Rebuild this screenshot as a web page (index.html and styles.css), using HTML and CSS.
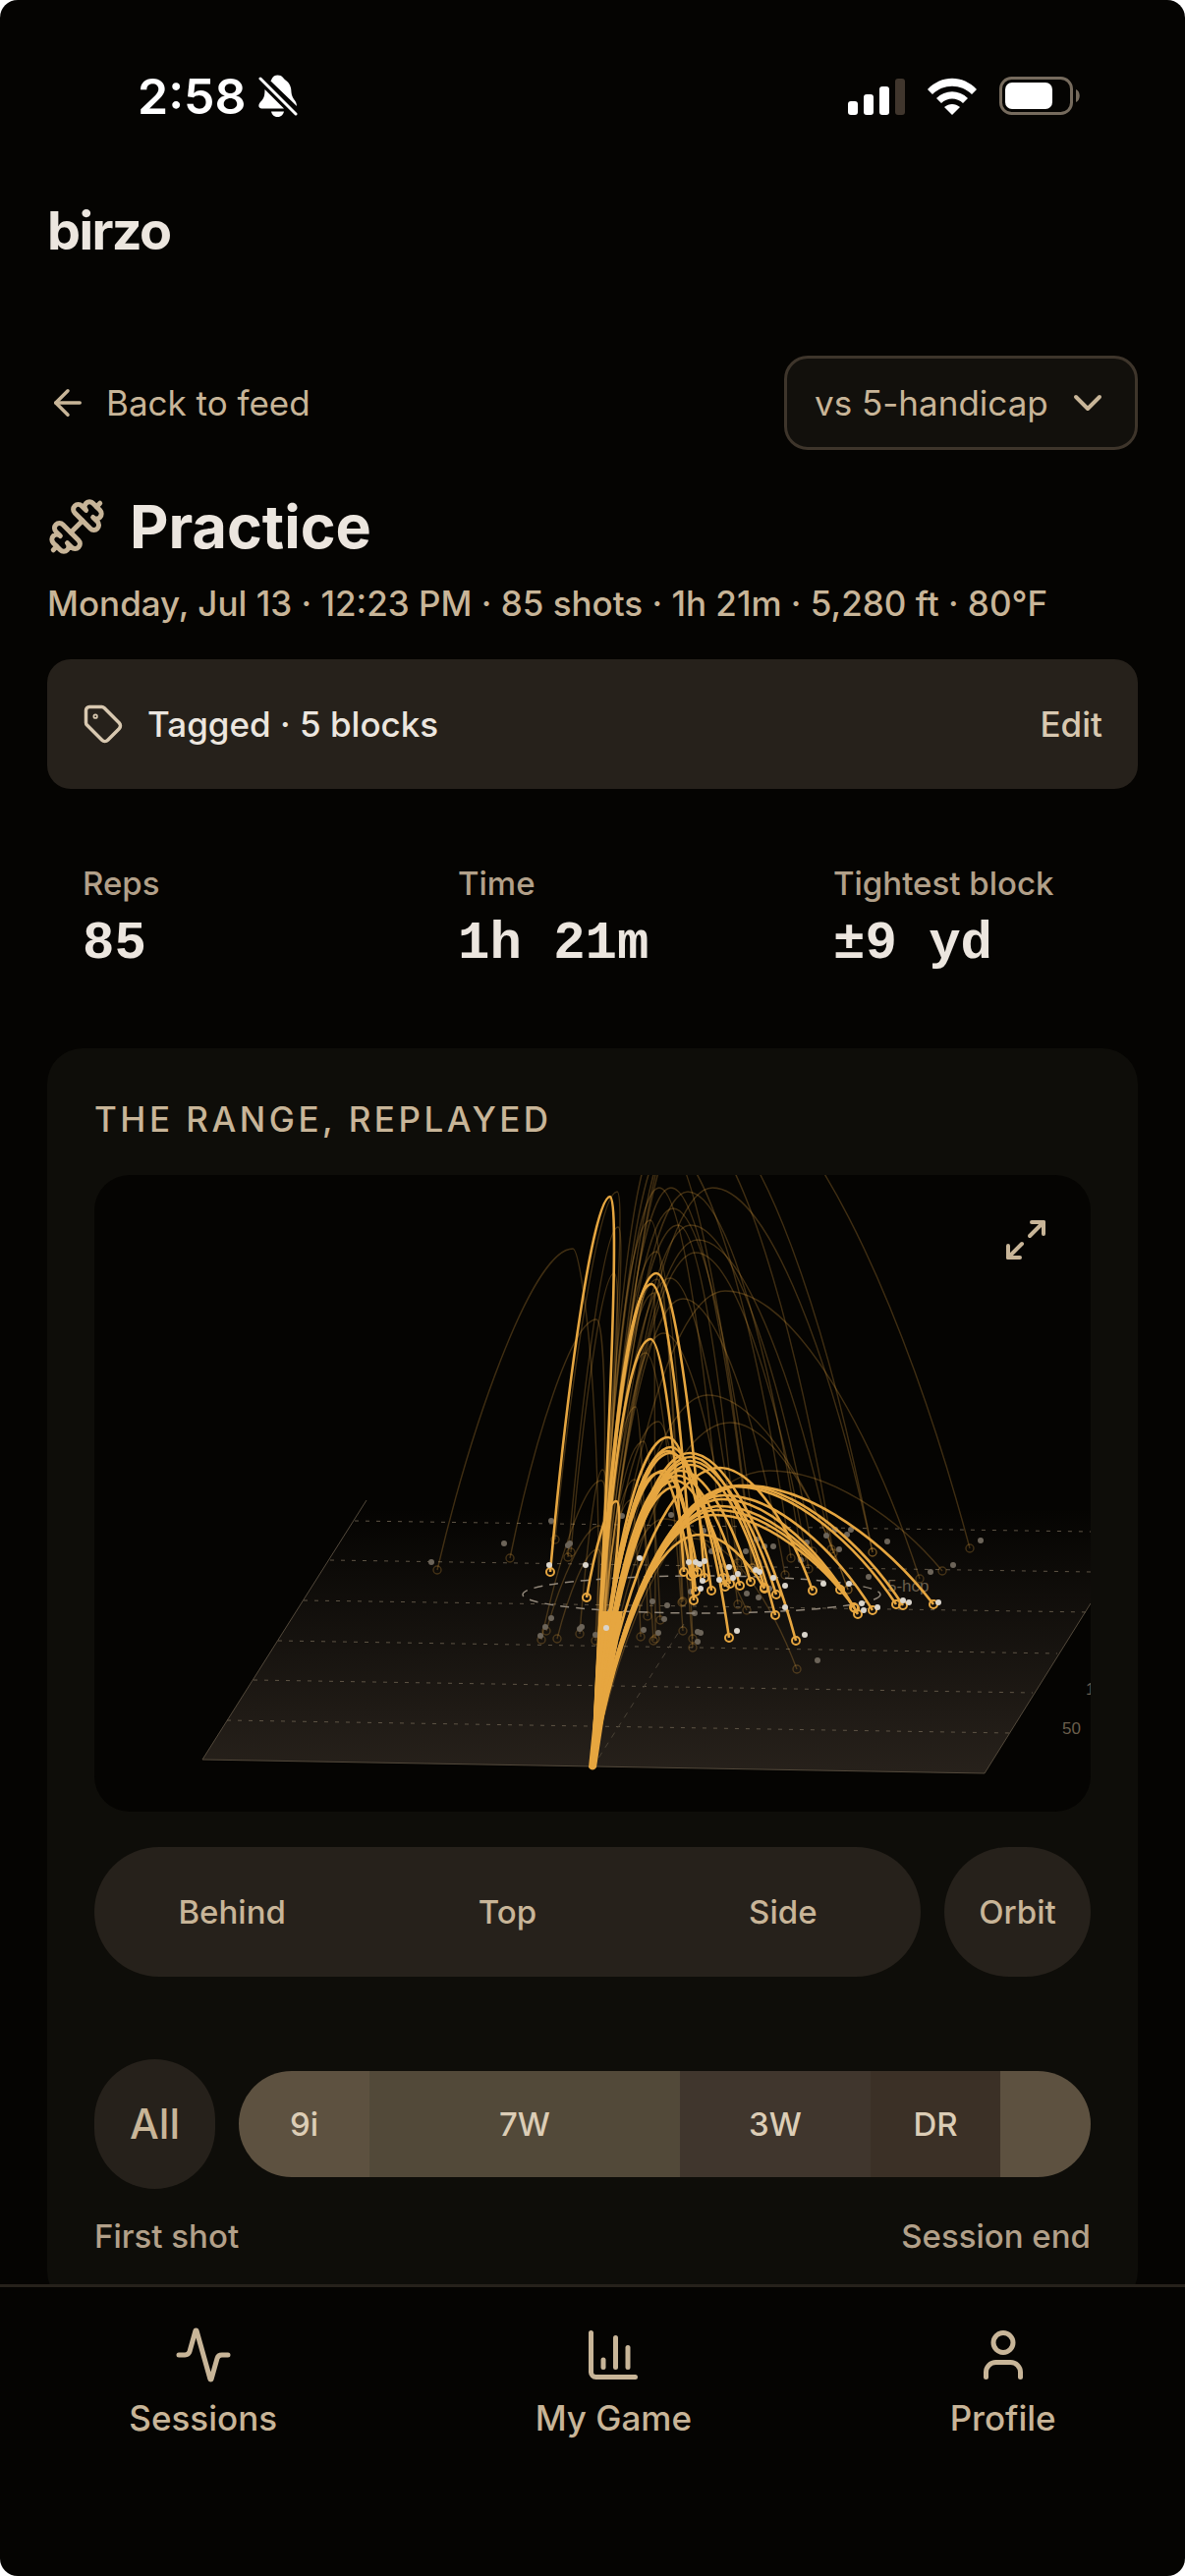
FILE: index.html
```html
<!DOCTYPE html>
<html lang="en">
<head>
    <meta charset="UTF-8">
    <meta name="viewport" content="width=device-width, initial-scale=1.0">
    <title>birzo - Practice</title>
    <link rel="stylesheet" href="styles.css">
</head>
<body>
    <div class="app">
        <div class="status-bar">
            <div class="status-left">
                <span class="time">2:58</span>
                <svg class="bell" viewBox="0 0 40 44" aria-hidden="true">
                    <path class="solid" d="M12 7C14 5 14 0.500 19.500 0.500S25 4 27.500 5.500C32 8.500 33.500 13 33.500 18C34 25 39 26 39 32L12.500 6.500ZM6.500 15L26 34.500H3.500C0 34.500 -0.500 31 1.500 28.500C4.500 25 6.500 24 6.500 15ZM13 37.500H26C25 41.500 22.500 43 19.500 43S14 41.500 13 37.500Z"/>
                    <path class="slash" d="M2 4L38 40"/>
                </svg>
            </div>
            <div class="status-right">
                <svg class="signal" viewBox="0 0 58 38" aria-hidden="true">
                    <rect x="0" y="24" width="10" height="14" rx="3"/>
                    <rect x="16" y="17" width="10" height="21" rx="3"/>
                    <rect x="32" y="9" width="10" height="29" rx="3"/>
                    <rect class="off" x="48" y="1" width="10" height="37" rx="3"/>
                </svg>
                <svg class="wifi" viewBox="0 0 52 38" aria-hidden="true">
                    <path d="M1 12C15 -3 37 -3 51 12L46 17C35 6 17 6 6 17Z"/>
                    <path d="M10 21C19 12 33 12 42 21L37 26C31 20 21 20 15 26Z"/>
                    <path d="M18 30C23 26 29 26 34 30L26 38Z"/>
                </svg>
                <svg class="battery" viewBox="0 0 84 40" aria-hidden="true">
                    <rect class="shell" x="1.500" y="1.500" width="72" height="36" rx="11"/>
                    <rect x="6" y="6" width="48" height="27" rx="7"/>
                    <path class="nub" d="M78 13C83 15 83 24 78 26Z"/>
                </svg>
            </div>
        </div>

        <main class="content">
            <header class="brand">birzo</header>

            <div class="toolbar">
                <a class="back" href="#">
                    <svg class="icon icon-md" viewBox="0 0 24 24" aria-hidden="true"><path d="m12 19-7-7 7-7"/><path d="M19 12H5"/></svg>
                    Back to feed
                </a>
                <div class="compare">
                    <select aria-label="Compare against">
                        <option>vs 5-handicap</option>
                        <option>vs 10-handicap</option>
                        <option>vs scratch</option>
                    </select>
                    <svg class="icon icon-lg" viewBox="0 0 24 24" aria-hidden="true"><path d="m6 9 6 6 6-6"/></svg>
                </div>
            </div>

            <h1 class="title">
                <svg class="icon icon-xl" viewBox="0 0 24 24" aria-hidden="true">
                    <path d="M17.596 12.768a2 2 0 1 0 2.829-2.829l-1.768-1.767a2 2 0 0 0 2.828-2.829l-2.828-2.828a2 2 0 0 0-2.829 2.828l-1.767-1.768a2 2 0 1 0-2.829 2.829z"/>
                    <path d="m2.500 21.500 1.400-1.400"/>
                    <path d="m20.100 3.900 1.400-1.400"/>
                    <path d="M5.343 21.485a2 2 0 1 0 2.829-2.828l1.767 1.768a2 2 0 1 0 2.829-2.829l-6.364-6.364a2 2 0 1 0-2.829 2.829l1.768 1.767a2 2 0 0 0-2.828 2.829z"/>
                    <path d="m9.600 14.400 4.800-4.800"/>
                </svg>
                Practice
            </h1>
            <p class="meta">Monday, Jul 13 · 12:23 PM · 85 shots · 1h 21m · 5,280 ft · 80°F</p>

            <div class="tagged">
                <svg class="icon icon-md" viewBox="0 0 24 24" aria-hidden="true">
                    <path d="M12.586 2.586A2 2 0 0 0 11.172 2H4a2 2 0 0 0-2 2v7.172a2 2 0 0 0 .586 1.414l8.704 8.704a2.426 2.426 0 0 0 3.420 0l6.580-6.580a2.426 2.426 0 0 0 0-3.420z"/>
                    <circle cx="7.500" cy="7.500" r=".5"/>
                </svg>
                <span>Tagged · 5 blocks</span>
                <button class="edit" type="button">Edit</button>
            </div>

            <dl class="stats">
                <div class="stat"><dt>Reps</dt><dd>85</dd></div>
                <div class="stat"><dt>Time</dt><dd>1h 21m</dd></div>
                <div class="stat"><dt>Tightest block</dt><dd>±9 yd</dd></div>
            </dl>

            <section class="panel">
                <h2>The range, replayed</h2>

                <div class="range">
                    <svg class="scene" viewBox="0 0 1014 648" role="img" aria-label="Shot trajectories on the range">
                        <defs>
                            <linearGradient id="turf" x1="0" y1="340" x2="0" y2="608" gradientUnits="userSpaceOnUse">
                                <stop offset="0" stop-color="#27211b" stop-opacity="0"/>
                                <stop offset="0.5" stop-color="#27211b" stop-opacity="0.5"/>
                                <stop offset="1" stop-color="#27211b"/>
                            </linearGradient>
                        </defs>
                        <path class="turf" d="M110 595L277 331H1014V436L906 609Z"/>
                        <path class="edge" d="M277 331L110 595L906 609L1014 436"/>
                        <g class="yards">
                            <path d="M265 352L1014 363"/>
                            <path d="M240 392L1014 404"/>
                            <path d="M213 433L1014 445"/>
                            <path d="M187 474L980 487"/>
                            <path d="M162 514L955 527"/>
                            <path d="M135 555L932 568"/>
                        </g>
                        <path class="aim" d="M507 603L600 457"/>
                        <text x="985" y="569">50</text>
                        <text x="1009" y="529">100</text>
                        <text x="807" y="424">5-hcp</text>
                        <g id="faded"></g>
                        <ellipse class="target" cx="618" cy="427" rx="182" ry="19"/>
                        <path class="trunk" d="M503 603L509 544L516 444H538L532 480L520 544L511 603Q507 608 503 603Z"/>
                        <g id="active"></g>
                    </svg>
                    <button class="expand" type="button" aria-label="Full screen">
                        <svg class="icon icon-lg" viewBox="0 0 24 24" aria-hidden="true"><path d="M15 3h6v6"/><path d="m21 3-7 7"/><path d="m3 21 7-7"/><path d="M9 21H3v-6"/></svg>
                    </button>
                </div>

                <div class="views">
                    <div class="segmented">
                        <button type="button">Behind</button>
                        <button type="button">Top</button>
                        <button type="button">Side</button>
                    </div>
                    <button class="orbit" type="button">Orbit</button>
                </div>

                <div class="timeline">
                    <button class="all" type="button">All</button>
                    <div class="blocks">
                        <button class="tone-a" type="button" style="flex-grow: 133">9i</button>
                        <button class="tone-b" type="button" style="flex-grow: 316">7W</button>
                        <button class="tone-c" type="button" style="flex-grow: 194">3W</button>
                        <button class="tone-d" type="button" style="flex-grow: 132">DR</button>
                        <button class="tone-a" type="button" style="flex-grow: 92" aria-label="Last block"></button>
                    </div>
                </div>
                <div class="ends"><span>First shot</span><span>Session end</span></div>
            </section>
        </main>

        <nav class="tabs">
            <a href="#">
                <svg class="icon icon-xl" viewBox="0 0 24 24" aria-hidden="true"><path d="M22 12h-2.480a2 2 0 0 0-1.930 1.460l-2.350 8.360a.25.25 0 0 1-.48 0L9.240 2.180a.25.25 0 0 0-.48 0l-2.350 8.360A2 2 0 0 1 4.490 12H2"/></svg>
                Sessions
            </a>
            <a href="#">
                <svg class="icon icon-xl" viewBox="0 0 24 24" aria-hidden="true"><path d="M3 3v16a2 2 0 0 0 2 2h16"/><path d="M18 17V9"/><path d="M13 17V5"/><path d="M8 17v-3"/></svg>
                My Game
            </a>
            <a href="#">
                <svg class="icon icon-xl" viewBox="0 0 24 24" aria-hidden="true"><path d="M19 21v-2a4 4 0 0 0-4-4H9a4 4 0 0 0-4 4v2"/><circle cx="12" cy="7" r="4"/></svg>
                Profile
            </a>
        </nav>
    </div>

    <script src="range.js"></script>
</body>
</html>
```
FILE: styles.css
```css
* {
    box-sizing: border-box;
    margin: 0;
    padding: 0;
}

html {
    background-color: #fff;
}

body {
    font-family: Inter, 'Liberation Sans', sans-serif;
    font-size: 35px;
    line-height: 48px;
    color: #c8b598;
}

button,
select {
    font: inherit;
    color: inherit;
    background: none;
    border: none;
    cursor: pointer;
}

a {
    color: inherit;
    text-decoration: none;
}

.app {
    display: flex;
    flex-direction: column;
    height: 100vh;
    overflow: hidden;
    border-radius: 18px;
    background-color: #050402;
}

/* Icons */
.icon {
    flex: none;
    fill: none;
    stroke: currentColor;
    stroke-width: 2;
    stroke-linecap: round;
    stroke-linejoin: round;
}

.icon-md {
    width: 42px;
    height: 42px;
}

.icon-lg {
    width: 48px;
    height: 48px;
}

.icon-xl {
    width: 60px;
    height: 60px;
}

/* Status bar */
.status-bar {
    display: flex;
    justify-content: space-between;
    align-items: center;
    flex: none;
    height: 195px;
    padding: 0 105px 0 140px;
    color: #fff;
    fill: #fff;
}

.status-left,
.status-right {
    display: flex;
    align-items: center;
}

.status-left {
    gap: 12px;
}

.status-right {
    gap: 22px;
}

.time {
    font-size: 50px;
    font-weight: 600;
}

.bell {
    width: 40px;
    height: 44px;
}

.slash {
    stroke: #fff;
    stroke-width: 3;
    stroke-linecap: round;
}

.signal {
    width: 58px;
    height: 38px;
}

.signal .off {
    fill: #40362d;
}

.wifi {
    width: 52px;
    height: 38px;
}

.battery {
    width: 84px;
    height: 40px;
}

.battery .shell {
    fill: none;
    stroke: #766b5d;
    stroke-width: 3;
}

.battery .nub {
    fill: #766b5d;
}

/* Content */
.content {
    flex: 1;
    min-height: 0;
    overflow-y: auto;
    scrollbar-width: none;
    padding: 10px 48px 48px;
}

.brand {
    font-size: 54px;
    font-weight: 700;
    line-height: 60px;
    letter-spacing: -0.03em;
    color: #ece6df;
}

.toolbar {
    display: flex;
    justify-content: space-between;
    align-items: center;
    margin-top: 97px;
}

.back {
    display: flex;
    align-items: center;
    gap: 18px;
}

.compare {
    position: relative;
}

.compare select {
    appearance: none;
    width: 360px;
    height: 96px;
    padding: 0 72px 0 28px;
    border: 3px solid #3e352b;
    border-radius: 24px;
    background-color: #12100c;
}

.compare .icon {
    position: absolute;
    top: 24px;
    right: 27px;
    pointer-events: none;
}

.title {
    display: flex;
    align-items: center;
    gap: 24px;
    margin-top: 42px;
    font-size: 61px;
    font-weight: 700;
    line-height: 72px;
    color: #ece6df;
}

.title .icon {
    color: #c8b598;
}

.meta {
    margin-top: 18px;
    font-weight: 500;
}

.tagged {
    display: flex;
    align-items: center;
    gap: 24px;
    height: 132px;
    margin-top: 33px;
    padding: 0 36px;
    border-radius: 24px;
    background-color: #26211b;
    font-weight: 500;
    color: #ece6df;
}

.tagged .icon {
    color: #d8c8b0;
}

.edit {
    margin-left: auto;
    color: #d8c8b0;
}

.stats {
    display: grid;
    grid-template-columns: repeat(3, 1fr);
    gap: 36px;
    margin: 36px 0;
}

.stat {
    padding: 36px 0 32px 36px;
    white-space: nowrap;
}

.stat dt {
    font-size: 33px;
    font-weight: 500;
    color: #b2a089;
}

.stat dd {
    font-family: 'Liberation Mono', monospace;
    font-size: 54px;
    font-weight: 700;
    line-height: 76px;
    color: #ece6df;
}

/* Range panel */
.panel {
    padding: 48px;
    border-radius: 36px;
    background-color: #0e0d09;
}

.panel h2 {
    font-size: 35px;
    font-weight: 500;
    letter-spacing: 0.1em;
    text-transform: uppercase;
}

.range {
    position: relative;
    margin-top: 33px;
    border-radius: 36px;
    overflow: hidden;
    background-color: #050402;
}

.scene {
    display: block;
    width: 100%;
    height: auto;
    fill: none;
}

.scene text {
    font-family: 'Liberation Sans', sans-serif;
    font-size: 17px;
    fill: #6a5e4c;
}

.turf {
    fill: url(#turf);
}

.edge {
    stroke: #544a3c;
    stroke-width: 1;
}

.yards {
    stroke: #5e5445;
    stroke-width: 1;
    stroke-dasharray: 4 7;
}

.aim {
    stroke: #4a4236;
    stroke-dasharray: 6 6;
}

.target {
    stroke: #91877a;
    stroke-width: 1.500;
    stroke-dasharray: 9 7;
}

.trunk {
    fill: #e6a640;
}

#faded {
    stroke: #e6a640;
    stroke-opacity: 0.26;
    stroke-width: 1.400;
}

#active {
    stroke: #e6a640;
    stroke-width: 2.600;
}

#active circle {
    stroke-width: 2;
}

#faded circle.ball,
#active circle.ball {
    stroke: none;
    fill: #d9d4cb;
}

#faded circle.ball {
    fill: #6c6459;
}

.expand {
    position: absolute;
    top: 24px;
    right: 24px;
    display: grid;
    place-items: center;
    width: 84px;
    height: 84px;
}

.views,
.timeline {
    display: flex;
    align-items: center;
    gap: 24px;
    font-size: 33px;
    font-weight: 500;
}

.views {
    margin-top: 36px;
}

.segmented {
    display: grid;
    grid-template-columns: repeat(3, 1fr);
    flex: 1;
    border-radius: 66px;
    background-color: #26211b;
}

.segmented button {
    height: 132px;
}

.orbit {
    width: 149px;
    height: 132px;
    border-radius: 66px;
    background-color: #26211b;
}

.timeline {
    margin-top: 84px;
}

.all {
    width: 123px;
    height: 132px;
    border-radius: 66px;
    background-color: #26211b;
    font-size: 42px;
}

.blocks {
    display: flex;
    flex: 1;
    height: 108px;
    border-radius: 54px;
    overflow: hidden;
    color: #dccdb6;
}

.blocks button {
    flex-basis: 0;
}

.tone-a {
    background-color: #5d5140;
}

.tone-b {
    background-color: #524939;
}

.tone-c {
    background-color: #40362d;
}

.tone-d {
    background-color: #3b3026;
}

.ends {
    display: flex;
    justify-content: space-between;
    margin-top: 24px;
    font-size: 33px;
    font-weight: 500;
    color: #b2a089;
}

/* Bottom tabs */
.tabs {
    display: flex;
    justify-content: space-around;
    flex: none;
    height: 297px;
    padding-top: 39px;
    border-top: 3px solid #26211b;
    font-weight: 500;
}

.tabs a {
    display: flex;
    flex-direction: column;
    align-items: center;
    gap: 10px;
}
```
FILE: range.js
```js
// Each shot: apex x, apex y, landing x, landing y
const tee = { x: 507, y: 603 };

const activeShots = [
    [525, 22, 464, 404], [572, 100, 621, 410], [567, 111, 610, 433], [566, 167, 600, 404],
    [584, 267, 628, 423], [587, 277, 646, 471], [584, 281, 642, 419], [586, 283, 640, 410],
    [606, 283, 714, 474], [607, 287, 693, 448], [606, 291, 694, 427], [607, 295, 682, 420],
    [597, 301, 668, 414], [594, 306, 657, 418], [591, 311, 647, 416], [588, 307, 612, 424],
    [592, 317, 610, 406], [637, 298, 731, 423], [661, 316, 854, 437], [656, 316, 823, 438],
    [651, 317, 816, 437], [641, 326, 792, 443], [639, 330, 777, 447], [637, 337, 773, 440],
    [634, 341, 759, 422], [631, 346, 774, 441], [617, 366, 682, 421], [531, 332, 501, 430],
    [579, 301, 614, 404], [575, 303, 607, 408]
];

const fadedShots = [
    [487, 75, 349, 402], [511, 147, 423, 390], [532, 17, 469, 371], [533, 53, 482, 389],
    [529, 100, 485, 384], [575, 13, 640, 400], [587, 13, 669, 400], [604, 17, 720, 390],
    [629, 13, 792, 384], [589, 34, 675, 395], [594, 51, 655, 395], [607, 51, 731, 383],
    [614, 66, 750, 381], [612, 79, 727, 401], [642, 118, 840, 411], [566, 46, 598, 435],
    [572, 78, 609, 472], [586, 105, 655, 405], [599, 126, 703, 407], [579, 161, 655, 437],
    [624, 224, 767, 422], [647, 252, 767, 422], [687, 301, 863, 403], [574, 251, 609, 481],
    [559, 271, 576, 453], [551, 236, 563, 449], [561, 181, 599, 464], [620, -110, 891, 380],
    [600, -60, 752, 385], [610, -70, 792, 384], [576, -40, 670, 400], [582, -30, 709, 390],
    [610, 370, 715, 503], [516, 311, 455, 473], [514, 357, 460, 464], [512, 381, 471, 472],
    [517, 300, 494, 467], [520, 340, 510, 474], [546, 331, 556, 470], [550, 310, 569, 474],
    [580, 350, 664, 443], [570, 120, 571, 472], [573, 106, 599, 434]
];

const activeBalls = [
    [463, 397], [500, 397], [605, 394], [612, 394], [616, 396], [621, 393], [619, 413],
    [617, 421], [646, 399], [655, 406], [650, 410], [636, 412], [673, 402], [677, 404],
    [691, 410], [703, 418], [703, 440], [654, 464], [723, 468], [742, 416], [768, 416],
    [781, 436], [783, 443], [797, 440], [823, 433], [829, 435], [859, 435], [555, 390],
    [521, 461]
];

const fadedBalls = [
    [343, 394], [417, 375], [465, 352], [482, 377], [484, 375], [465, 451], [459, 460],
    [454, 469], [494, 462], [496, 460], [510, 468], [568, 434], [583, 438], [559, 463],
    [574, 466], [580, 452], [611, 446], [614, 465], [617, 466], [614, 475], [664, 426],
    [676, 430], [687, 421], [674, 371], [682, 378], [691, 378], [719, 392], [725, 374],
    [745, 367], [754, 361], [766, 366], [770, 361], [758, 381], [788, 409], [807, 373],
    [851, 404], [874, 397], [902, 372], [736, 494], [537, 347], [587, 346], [591, 360],
    [620, 362], [628, 383], [636, 381], [663, 383], [607, 424]
];

function arcPath([ax, ay, lx, ly]) {
    const up = ay - tee.y;
    const down = ly - ay;
    const goesLeft = lx < ax;
    // Shots that turn left lean right of the apex before they come over the top
    const rise = goesLeft
        ? [tee.x + 18, tee.y + up * 0.6, ax + 10, ay]
        : [tee.x + (ax - tee.x) * 0.2, tee.y + up * 0.6, ax - (ax - tee.x) * 0.4, ay];
    const fall = goesLeft
        ? [ax + (lx - ax) * 0.28, ay, lx - (lx - ax) * 0.28, ly - down * 0.5]
        : [ax + (lx - ax) * 0.36, ay, lx - (lx - ax) * 0.24, ly - down * 0.5];
    return `M${tee.x} ${tee.y}C${rise.join(' ')} ${ax} ${ay}C${fall.join(' ')} ${lx} ${ly}`;
}

function drawShots(id, shots, balls) {
    const arcs = shots.map(shot => `<path d="${arcPath(shot)}"/>`);
    const rings = shots.map(shot => `<circle cx="${shot[2]}" cy="${shot[3]}" r="4"/>`);
    const dots = balls.map(([x, y]) => `<circle class="ball" cx="${x}" cy="${y}" r="3"/>`);
    document.getElementById(id).innerHTML = arcs.concat(rings, dots).join('');
}

drawShots('faded', fadedShots, fadedBalls);
drawShots('active', activeShots, activeBalls);
```
